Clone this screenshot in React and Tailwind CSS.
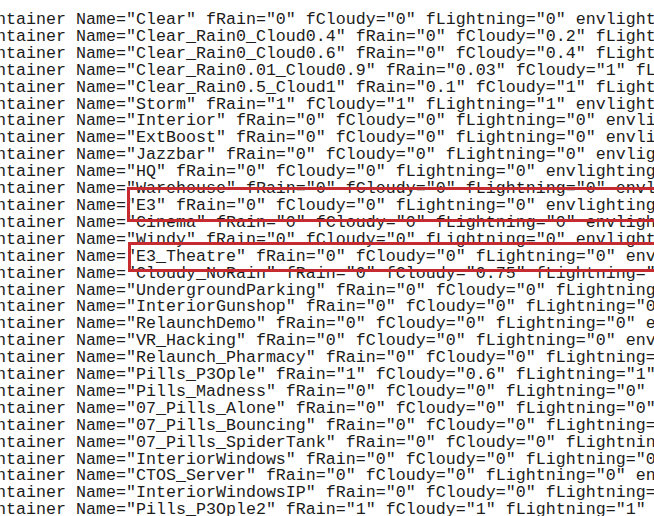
const rest0 = ' fRain="0" fCloudy="0" fLightning="0" envlighting="default"';

const lines = [
  'ntainer Name="Clear"' + rest0,
  'ntainer Name="Clear_Rain0_Cloud0.4" fRain="0" fCloudy="0.2" fLightning="0"',
  'ntainer Name="Clear_Rain0_Cloud0.6" fRain="0" fCloudy="0.4" fLightning="0"',
  'ntainer Name="Clear_Rain0.01_Cloud0.9" fRain="0.03" fCloudy="1" fLightning="0"',
  'ntainer Name="Clear_Rain0.5_Cloud1" fRain="0.1" fCloudy="1" fLightning="0"',
  'ntainer Name="Storm" fRain="1" fCloudy="1" fLightning="1" envlighting="storm"',
  'ntainer Name="Interior"' + rest0,
  'ntainer Name="ExtBoost"' + rest0,
  'ntainer Name="Jazzbar"' + rest0,
  'ntainer Name="HQ"' + rest0,
  'ntainer Name="Warehouse"' + rest0,
  'ntainer Name="E3"' + rest0,
  'ntainer Name="Cinema"' + rest0,
  'ntainer Name="Windy"' + rest0,
  'ntainer Name="E3_Theatre"' + rest0,
  'ntainer Name="Cloudy_NoRain" fRain="0" fCloudy="0.75" fLightning="0"',
  'ntainer Name="UndergroundParking"' + rest0,
  'ntainer Name="InteriorGunshop"' + rest0,
  'ntainer Name="RelaunchDemo"' + rest0,
  'ntainer Name="VR_Hacking"' + rest0,
  'ntainer Name="Relaunch_Pharmacy"' + rest0,
  'ntainer Name="Pills_P3Ople" fRain="1" fCloudy="0.6" fLightning="1"',
  'ntainer Name="Pills_Madness"' + rest0,
  'ntainer Name="07_Pills_Alone"' + rest0,
  'ntainer Name="07_Pills_Bouncing"' + rest0,
  'ntainer Name="07_Pills_SpiderTank"' + rest0,
  'ntainer Name="InteriorWindows"' + rest0,
  'ntainer Name="CTOS_Server"' + rest0,
  'ntainer Name="InteriorWindowsIP"' + rest0,
  'ntainer Name="Pills_P3Ople2" fRain="1" fCloudy="1" fLightning="1"',
];

export default function App() {
  return (
    <main className="relative w-[654px] h-[516px] overflow-hidden bg-white">
      <pre
        className="ml-[-4px] pt-[12px] text-[16.67px] leading-[16.9px] text-[#1c1c1c] whitespace-pre"
        style={{ fontFamily: '"Liberation Mono", monospace' }}
      >
        {lines.map((l, i) => (
          <div key={i}>{l}</div>
        ))}
      </pre>

      {/* highlight boxes */}
      <div className="absolute left-[127px] top-[187px] w-[560px] h-[35px] border-[3px] border-[#c62b32]" />
      <div className="absolute left-[128px] top-[242px] w-[560px] h-[30px] border-[3px] border-[#c62b32]" />
    </main>
  );
}
